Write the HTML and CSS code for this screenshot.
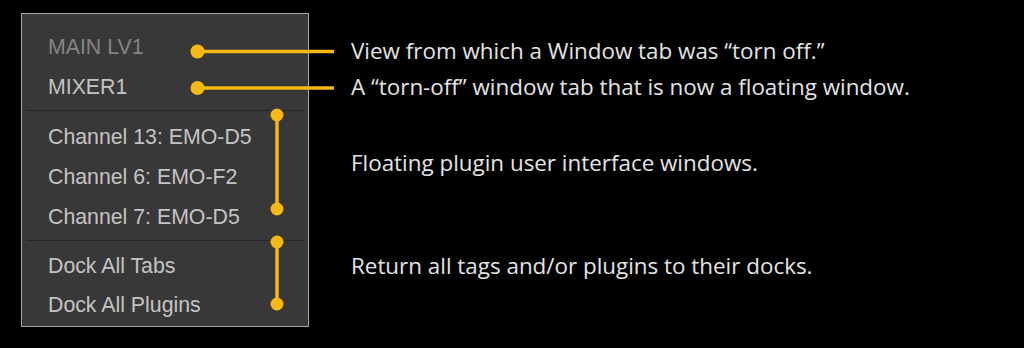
FILE: index.html
```html
<!DOCTYPE html>
<html lang="en">
<head>
    <meta charset="UTF-8">
    <meta name="viewport" content="width=device-width, initial-scale=1.0">
    <title>Window Menu</title>
    <link rel="stylesheet" href="styles.css">
</head>
<body>

<div class="figure">

    <!-- The Window menu itself -->
    <div class="menu">
        <div class="group group-views">
            <div class="item disabled">MAIN LV1</div>
            <div class="item">MIXER1</div>
        </div>
        <div class="group group-plugins">
            <div class="item">Channel 13: EMO-D5</div>
            <div class="item">Channel 6: EMO-F2</div>
            <div class="item">Channel 7: EMO-D5</div>
        </div>
        <div class="group group-dock">
            <div class="item">Dock All Tabs</div>
            <div class="item">Dock All Plugins</div>
        </div>
    </div>

    <!-- Callout text -->
    <div class="notes">
        <p class="note note-view">View from which a Window tab was “torn off.”</p>
        <p class="note note-tab">A “torn-off” window tab that is now a floating window.</p>
        <p class="note note-plugins">Floating plugin user interface windows.</p>
        <p class="note note-dock">Return all tags and/or plugins to their docks.</p>
    </div>

    <!-- Yellow leader lines drawn over the menu -->
    <svg class="leaders" width="1024" height="348" viewBox="0 0 1024 348">
        <g stroke="#f6b914" stroke-width="3.5" fill="none">
            <line x1="197" y1="51.5" x2="334" y2="51.5"/>
            <line x1="197" y1="88" x2="334" y2="88"/>
            <line x1="277" y1="115" x2="277" y2="209"/>
            <line x1="277" y1="242" x2="277" y2="304"/>
        </g>
        <g fill="#f6b914">
            <circle cx="197.5" cy="51.5" r="7"/>
            <circle cx="197.5" cy="88" r="7"/>
            <circle cx="277" cy="115" r="6.5"/>
            <circle cx="277" cy="209" r="6.5"/>
            <circle cx="277" cy="242" r="6.5"/>
            <circle cx="277" cy="304" r="6.5"/>
        </g>
    </svg>

</div>

</body>
</html>
```

FILE: styles.css
```css
body {
    margin: 0;
    padding: 0;
    background-color: #000;
    width: 1024px;
    height: 348px;
    overflow: hidden;
}
.figure {
    position: relative;
    display: flex;
    padding: 13px 0 0 21px;
}
.menu {
    width: 286px;
    height: 312px;
    background-color: #383838;
    border: 1px solid #a8a8a8;
    font-family: 'Liberation Sans', Arial, sans-serif;
    font-size: 21.3px;
    color: #c4c4c4;
    display: flex;
    flex-direction: column;
}
.group {
    margin: 0 4px;
    padding-left: 22px;
}
.group-views {
    padding-top: 13px;
    padding-bottom: 3px;
    border-bottom: 1px solid #262626;
}
.group-plugins {
    padding-top: 6px;
    padding-bottom: 3px;
    border-bottom: 1px solid #262626;
}
.group-dock {
    padding-top: 6px;
}
.item {
    height: 40px;
    line-height: 40px;
    white-space: nowrap;
}
.group-dock .item {
    height: 39px;
    line-height: 39px;
}
.item.disabled {
    color: #858585;
}
.notes {
    margin-left: 42px;
    font-family: 'Open Sans', sans-serif;
    font-size: 22.4px;
    color: #e4e4e4;
}
.note {
    margin: 0;
    height: 36px;
    line-height: 36px;
    white-space: nowrap;
}
.note-view {
    margin-top: 20px;
}
.note-plugins {
    margin-top: 40px;
}
.note-dock {
    margin-top: 67px;
}
.leaders {
    position: absolute;
    top: 0;
    left: 0;
    pointer-events: none;
}
```
